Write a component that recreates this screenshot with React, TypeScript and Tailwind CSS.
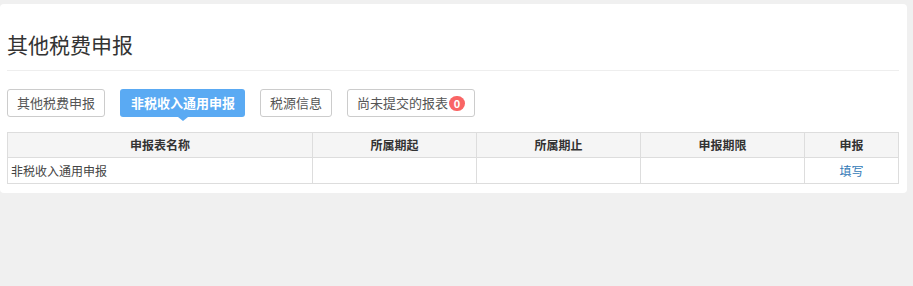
const tabs = [
  { label: '其他税费申报', active: false },
  { label: '非税收入通用申报', active: true },
  { label: '税源信息', active: false },
]

const columns = [
  { title: '申报表名称', width: 'w-[305px]' },
  { title: '所属期起', width: 'w-[164px]' },
  { title: '所属期止', width: 'w-[164px]' },
  { title: '申报期限', width: 'w-[164px]' },
  { title: '申报', width: 'w-[94px]' },
]

export default function App() {
  return (
    <div
      className="h-[286px] w-[913px] overflow-hidden bg-[#f0f0f0] pt-[4px]"
      style={{ fontFamily: '"Microsoft YaHei", "Noto Sans CJK SC", sans-serif' }}
    >
      <div className="w-[907px] rounded-[4px] bg-white pl-[7px] pr-[8px] pt-[25px] pb-[9px]">
        <h1 className="h-[30px] text-[21px] leading-[30px] font-normal text-[#333]">其他税费申报</h1>
        <div className="mt-[11px] border-t border-[#eeeeee]" />

        <div className="mt-[18px] flex gap-[15px]">
          {tabs.map((tab) =>
            tab.active ? (
              <button
                key={tab.label}
                className="relative h-[28px] rounded-[3px] bg-[#5aaaf3] pl-[11px] pr-[10px] text-[13px] leading-[28px] font-semibold whitespace-nowrap text-white"
              >
                {tab.label}
                <span className="absolute left-1/2 top-full -ml-[5px] h-0 w-0 border-x-[5px] border-t-[4px] border-x-transparent border-t-[#5aaaf3]" />
              </button>
            ) : (
              <button
                key={tab.label}
                className="h-[28px] rounded-[3px] border border-[#cccccc] bg-white px-[9px] text-[13px] leading-[26px] text-[#555]"
              >
                {tab.label}
              </button>
            )
          )}
          <button className="flex h-[28px] items-center rounded-[3px] border border-[#cccccc] bg-white pl-[9px] pr-[9px] text-[13px] leading-[26px] text-[#555]">
            尚未提交的报表
            <span className="ml-[1px] flex h-[15px] w-[16px] items-center justify-center rounded-full bg-[#f96565] text-[11px] leading-none font-bold text-white">
              0
            </span>
          </button>
        </div>

        <table className="mt-[15px] w-[891px] table-fixed border-collapse text-[12px] text-[#333]">
          <colgroup>
            {columns.map((c) => (
              <col key={c.title} className={c.width} />
            ))}
          </colgroup>
          <thead>
            <tr className="bg-[#f5f5f5]">
              {columns.map((c) => (
                <th key={c.title} className="h-[25px] border border-[#dddddd] p-0 text-center font-bold leading-[24px]">
                  {c.title}
                </th>
              ))}
            </tr>
          </thead>
          <tbody>
            <tr>
              <td className="h-[26px] border border-[#dddddd] pl-[3px] text-left leading-[25px] text-[#444]">非税收入通用申报</td>
              <td className="border border-[#dddddd]" />
              <td className="border border-[#dddddd]" />
              <td className="border border-[#dddddd]" />
              <td className="border border-[#dddddd] text-center">
                <a className="cursor-pointer text-[#337ab7]">填写</a>
              </td>
            </tr>
          </tbody>
        </table>
      </div>
    </div>
  )
}
